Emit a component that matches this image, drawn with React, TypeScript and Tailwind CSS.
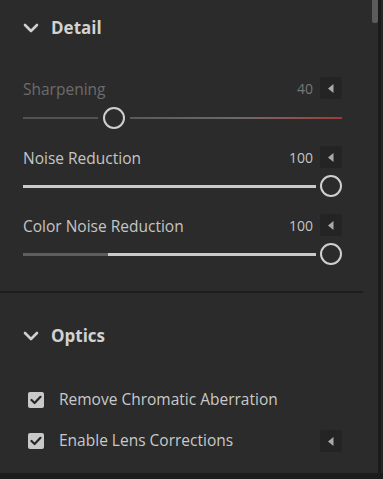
const font = { fontFamily: '"Open Sans", "Noto Sans", sans-serif' };

function Chevron() {
    return (
        <svg width="16" height="10" viewBox="0 0 16 10" className="shrink-0">
            <path d="M2 2 L8 8 L14 2" fill="none" stroke="#cfcfcf" strokeWidth="2.6" strokeLinecap="round" strokeLinejoin="round" />
        </svg>
    );
}

function ResetButton() {
    return (
        <div className="flex h-[22px] w-[22px] items-center justify-center rounded-[3px] bg-[#242424]">
            <svg width="6" height="9" viewBox="0 0 6 9">
                <path d="M5.5 0 L0 4.5 L5.5 9 Z" fill="#a9a9a9" />
            </svg>
        </div>
    );
}

function Thumb() {
    return <div className="h-[22px] w-[22px] shrink-0 rounded-full border-[2.5px] border-[#cfcfcf] bg-[#2b2b2b]" />;
}

function CheckBox() {
    return (
        <div className="flex h-[16px] w-[16px] shrink-0 items-center justify-center rounded-[2px] bg-[#c9c9c9]">
            <svg width="12" height="10" viewBox="0 0 12 10">
                <path d="M1.5 5 L4.6 8 L10.5 1.8" fill="none" stroke="#262626" strokeWidth="2.2" strokeLinecap="round" strokeLinejoin="round" />
            </svg>
        </div>
    );
}

function SectionHeader({ title }: { title: string }) {
    return (
        <div className="flex h-[56px] items-center gap-[12px] pl-[23px]">
            <Chevron />
            <span className="text-[17px] font-bold text-[#d2d2d2]">{title}</span>
        </div>
    );
}

function LabelRow({ label, value, dim }: { label: string; value: string; dim?: boolean }) {
    return (
        <div className="flex h-[22px] items-center pl-[23px] pr-[21px]">
            <span className={`mt-[3px] flex-1 text-[15.5px] ${dim ? "text-[#6c6c6c]" : "text-[#c5c5c5]"}`}>{label}</span>
            <span className={`mr-[7px] text-[14px] ${dim ? "text-[#777777]" : "text-[#c5c5c5]"}`}>{value}</span>
            <ResetButton />
        </div>
    );
}

export default function App() {
    return (
        <div className="flex h-[479px] w-[383px] flex-col bg-[#2b2b2b]" style={font}>
            <div className="flex min-h-0 flex-1">
                <div className="flex w-[363px] flex-col">
                    <SectionHeader title="Detail" />

                    <div className="mt-[21px]">
                        <LabelRow label="Sharpening" value="40" dim />
                        <div className="mt-[8px] flex h-[22px] items-center pl-[23px] pr-[21px]">
                            <div className="h-[2px] w-[75px] bg-[#525252]" />
                            <div className="mx-[5px]">
                                <Thumb />
                            </div>
                            <div className="h-[2px] flex-1 bg-gradient-to-r from-[#5a5a5a] via-[#6a6a6a] to-[#a03838]" />
                        </div>
                    </div>

                    <div className="mt-[17px]">
                        <LabelRow label="Noise Reduction" value="100" />
                        <div className="mt-[7px] flex h-[22px] items-center pl-[23px] pr-[21px]">
                            <div className="mr-[4px] h-[3px] flex-1 bg-[#cacaca]" />
                            <Thumb />
                        </div>
                    </div>

                    <div className="mt-[17px]">
                        <LabelRow label="Color Noise Reduction" value="100" />
                        <div className="mt-[7px] flex h-[22px] items-center pl-[23px] pr-[21px]">
                            <div className="h-[3px] w-[85px] bg-[#5e5e5e]" />
                            <div className="mr-[4px] h-[3px] flex-1 bg-[#cacaca]" />
                            <Thumb />
                        </div>
                    </div>

                    <div className="mt-[26px] h-[2px] bg-[#1d1d1d]" />

                    <div className="mt-[15px]">
                        <SectionHeader title="Optics" />
                    </div>

                    <div className="mt-[24px] flex h-[24px] items-center gap-[15px] pl-[28px]">
                        <CheckBox />
                        <span className="text-[15.5px] text-[#c9c9c9]">Remove Chromatic Aberration</span>
                    </div>
                    <div className="mt-[17px] flex h-[24px] items-center pl-[28px] pr-[21px]">
                        <CheckBox />
                        <span className="ml-[15px] flex-1 text-[15.5px] text-[#c9c9c9]">Enable Lens Corrections</span>
                        <ResetButton />
                    </div>
                </div>

                <div className="w-[9px]" />
                <div className="w-[6px]">
                    <div className="h-[23px] rounded-b-[2px] bg-[#5c5c5c]" />
                </div>
                <div className="w-[3px] bg-[#1b1b1b]" />
                <div className="w-[2px] bg-[#262626]" />
            </div>
            <div className="h-[6px] bg-[#1c1c1c]" />
        </div>
    );
}
